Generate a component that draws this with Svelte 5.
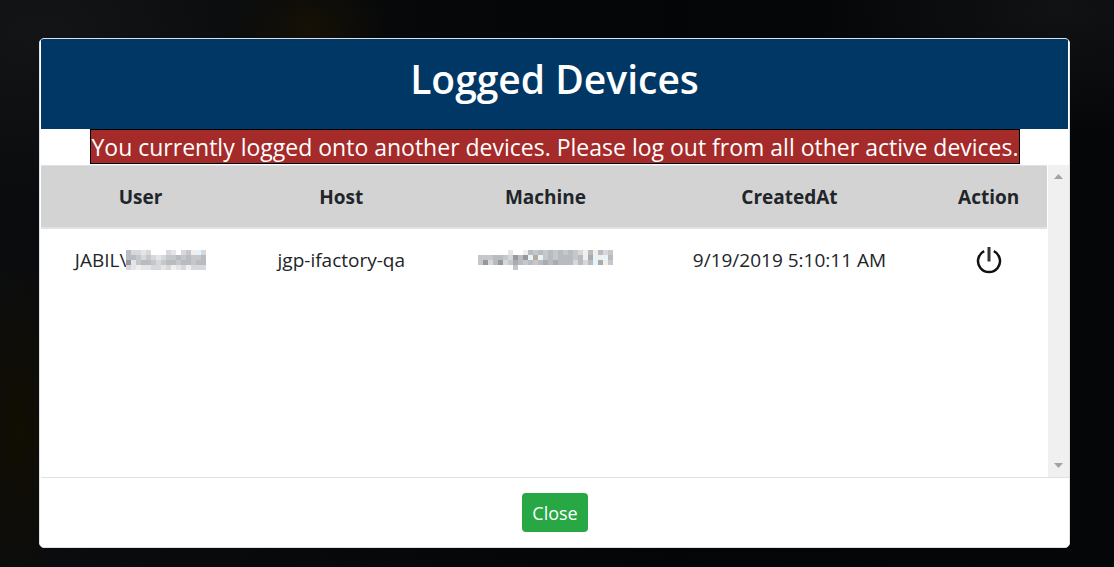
<script>
  const headings = ['User', 'Host', 'Machine', 'CreatedAt', 'Action'];

  // Each character is one 5px mosaic cell; '.' leaves the cell empty.
  const shades = {
    a: '#a8abb0', b: '#b8bbbf', c: '#c6c7cb', d: '#d6d8dc',
    e: '#e4e5e8', f: '#f2eee9', g: '#e6f3fb', h: '#9996a0', i: '#b9a999'
  };
  const userMask = ['bdded...de.dcfgd', 'bbcdcdedccbcbccb', 'hecbbcdcbbcbbcbb', 'defeeddedfedfddd'];
  const machineMask = [
    '......e..fbcbcbcbcbcdfbfbdc',
    'cccbbcdhbhgigcbcbbbcbfagfgb',
    'chdbhdcabcbcbababbbdbdbgafc',
    '.......c'
  ];
  function cells(rows) {
    return rows.flatMap((row, y) =>
      [...row].map((key, x) => ({ x: x * 5, y: y * 5, fill: shades[key] })).filter((cell) => cell.fill)
    );
  }
</script>

<main>
  <section class="dialog" role="dialog" aria-labelledby="title">
    <header><h1 id="title">Logged Devices</h1></header>
    <div class="notice">
      <p>You currently logged onto another devices. Please log out from all other active devices.</p>
    </div>
    <div class="body">
      <div class="list">
        <table>
          <colgroup><col class="user" /><col class="host" /><col class="machine" /><col class="created" /><col class="action" /></colgroup>
          <thead>
            <tr>{#each headings as heading}<th scope="col">{heading}</th>{/each}</tr>
          </thead>
          <tbody>
            <tr>
              <td>
                <span class="account">JABIL\<svg width="80" height="20" shape-rendering="crispEdges" aria-hidden="true">
                  {#each cells(userMask) as cell}<rect x={cell.x} y={cell.y} width="5" height="5" fill={cell.fill} />{/each}
                </svg></span>
              </td>
              <td>jgp-ifactory-qa</td>
              <td>
                <svg class="mask" width="135" height="20" shape-rendering="crispEdges" aria-hidden="true">
                  {#each cells(machineMask) as cell}<rect x={cell.x} y={cell.y} width="5" height="5" fill={cell.fill} />{/each}
                </svg>
              </td>
              <td>9/19/2019 5:10:11 AM</td>
              <td>
                <button class="power" aria-label="Log out">
                  <svg width="28" height="28" viewBox="0 0 28 28" fill="none" stroke="#111">
                    <path d="M9.200 5.200A11 11 0 1 0 18.800 5.200" stroke-width="2.500" />
                    <path d="M14 1V15.500" stroke="#333" stroke-width="3" />
                  </svg>
                </button>
              </td>
            </tr>
          </tbody>
        </table>
      </div>
      <div class="track" aria-hidden="true">
        <svg width="9" height="5"><path d="M0 5L4.500 0L9 5Z" fill="#a3a3a3" /></svg>
        <svg width="9" height="5"><path d="M0 0L4.500 5L9 0Z" fill="#a3a3a3" /></svg>
      </div>
    </div>
    <footer><button class="close">Close</button></footer>
  </section>
</main>

<style>
  :global(body) { margin: 0; background: #07090b; }
  * { box-sizing: border-box; }
  main {
    min-height: 100vh;
    padding: 38px 44px 19px 39px;
    background:
      radial-gradient(ellipse 80px 60px at 310px 28px, #161106, transparent),
      radial-gradient(ellipse 50px 170px at 18px 430px, #120e02, transparent),
      radial-gradient(ellipse 280px 160px at 40px 30px, #121416, transparent),
      radial-gradient(ellipse 260px 130px at 1060px 10px, #101214, transparent),
      linear-gradient(90deg, #0b0c0e, #030507 60%, #050608);
    color: #212529;
    font: 19px/30px "Open Sans", "Noto Sans", sans-serif;
  }
  .dialog {
    overflow: hidden;
    border: 1px solid #dee2e6;
    border-radius: 5px;
    background: #fff;
    padding-left: 1px;
  }
  header { height: 90px; margin-right: 1px; padding: 16px; background: #003764; color: #fff; text-align: center; }
  h1 { margin: 0; font-size: 39px; line-height: 48px; font-weight: 600; }
  .notice { height: 36px; text-align: center; }
  p {
    display: inline-block;
    margin: 0;
    padding-top: 2px;
    border: 1px solid #000;
    background: #a52a2a;
    color: #fff;
    font-size: 23px;
    line-height: 31px;
    white-space: nowrap;
  }
  .body { display: flex; }
  .list { flex: 1; min-height: 312px; }
  table { width: 100%; table-layout: fixed; border-collapse: collapse; text-align: center; }
  .user { width: 19.8%; }
  .host { width: 20.1%; }
  .machine { width: 20.5%; }
  .created { width: 28%; }
  .action { width: 11.6%; }
  th { height: 62px; padding: 2px 0 0; border-top: 1px solid #dee2e6; border-bottom: 2px solid #dee2e6; background: #d3d3d3; font-weight: 700; }
  td { height: 64px; padding: 0; }
  svg { display: block; }
  .account { display: flex; align-items: center; justify-content: center; }
  .mask { margin: 0 auto; }
  .power { margin: 0 auto; padding: 0; border: 0; background: none; display: block; }
  .track { width: 21px; margin-left: 1px; padding: 9px 0 9px; display: flex; flex-direction: column; align-items: center; justify-content: space-between; background: #f0f0f0; }
  footer { display: flex; justify-content: center; padding: 15px; border-top: 1px solid #dee2e6; }
  .close { height: 39px; padding: 2px 10px 0; border: 0; border-radius: 4px; background: #28a745; color: #fff; font: 18px/37px "Open Sans", "Noto Sans", sans-serif; }
</style>
